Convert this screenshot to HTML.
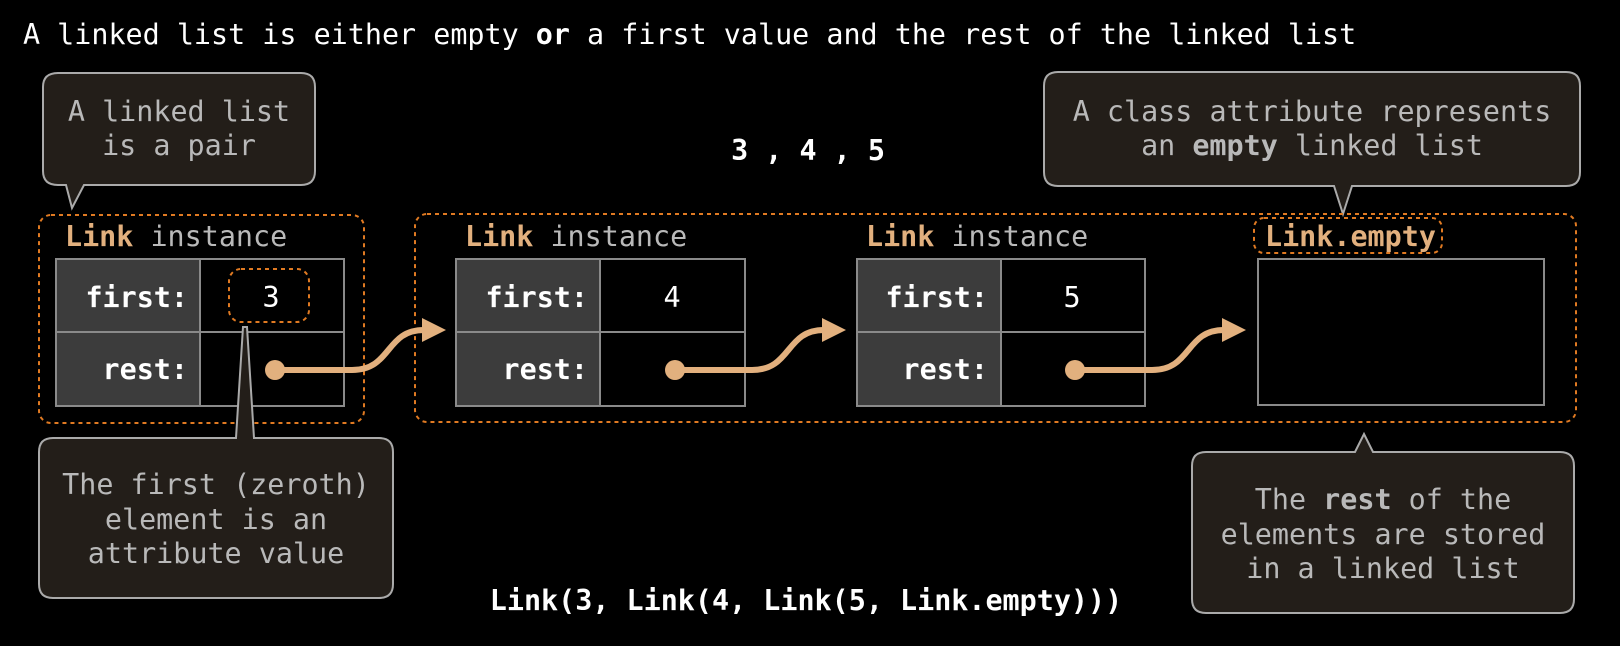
<!DOCTYPE html>
<html><head><meta charset="utf-8"><style>
html,body{margin:0;padding:0;background:#000;width:1620px;height:646px;overflow:hidden}
svg{display:block}
text{font-family:"DejaVu Sans Mono","Liberation Mono",monospace;font-size:28.4px}
.w{fill:#fff}.g{fill:#b9b9b9}.o{fill:#e2b07e;font-weight:bold}.b{font-weight:bold}
</style></head><body>
<svg width="1620" height="646" viewBox="0 0 1620 646" xmlns="http://www.w3.org/2000/svg">
<text x="23" y="44" class="w">A linked list is either empty <tspan class="b">or</tspan> a first value and the rest of the linked list</text>

<!-- bubble top-left -->
<path d="M58 73 H301 Q315 73 315 87 V171 Q315 185 301 185 H84 L72 208 L66 185 H58 Q43 185 43 171 V87 Q43 73 58 73 Z" fill="#231e19" stroke="#aaa" stroke-width="2"/>
<text x="179" y="121" class="g" text-anchor="middle">A linked list</text>
<text x="179" y="155" class="g" text-anchor="middle">is a pair</text>

<text x="808" y="160" class="w b" text-anchor="middle">3 , 4 , 5</text>

<!-- bubble top-right -->
<path d="M1058 72 H1566 Q1580 72 1580 86 V172 Q1580 186 1566 186 H1352 L1343 214 L1334 186 H1058 Q1044 186 1044 172 V86 Q1044 72 1058 72 Z" fill="#231e19" stroke="#aaa" stroke-width="2"/>
<text x="1312" y="121" class="g" text-anchor="middle">A class attribute represents</text>
<text x="1312" y="155" class="g" text-anchor="middle">an <tspan class="b">empty</tspan> linked list</text>

<!-- dashed boxes -->
<rect x="39" y="215" width="325" height="208" rx="12" fill="none" stroke="#e07a22" stroke-width="2" stroke-dasharray="4 4"/>
<rect x="415" y="214" width="1161" height="208" rx="12" fill="none" stroke="#e07a22" stroke-width="2" stroke-dasharray="4 4"/>

<text x="65" y="246" class="o">Link<tspan class="g" style="font-weight:normal"> instance</tspan></text>
<text x="465" y="246" class="o">Link<tspan class="g" style="font-weight:normal"> instance</tspan></text>
<text x="866" y="246" class="o">Link<tspan class="g" style="font-weight:normal"> instance</tspan></text>
<rect x="1254" y="218" width="188" height="35" rx="10" fill="none" stroke="#e07a22" stroke-width="2" stroke-dasharray="4 4"/>
<text x="1265" y="246" class="o">Link.empty</text>

<!-- tables -->
<g stroke="#8a8a8a" stroke-width="2">
<rect x="56" y="259" width="144" height="147" fill="#3c3c3c"/>
<rect x="200" y="259" width="144" height="147" fill="#000"/>
<line x1="56" y1="332" x2="344" y2="332"/>
<rect x="456" y="259" width="144" height="147" fill="#3c3c3c"/>
<rect x="600" y="259" width="145" height="147" fill="#000"/>
<line x1="456" y1="332" x2="745" y2="332"/>
<rect x="857" y="259" width="144" height="147" fill="#3c3c3c"/>
<rect x="1001" y="259" width="144" height="147" fill="#000"/>
<line x1="857" y1="332" x2="1145" y2="332"/>
<rect x="1258" y="259" width="286" height="146" fill="#000"/>
</g>
<g class="w b">
<text x="188" y="307" text-anchor="end" class="w b">first:</text>
<text x="188" y="379" text-anchor="end" class="w b">rest:</text>
<text x="588" y="307" text-anchor="end" class="w b">first:</text>
<text x="588" y="379" text-anchor="end" class="w b">rest:</text>
<text x="988" y="307" text-anchor="end" class="w b">first:</text>
<text x="988" y="379" text-anchor="end" class="w b">rest:</text>
</g>
<rect x="229" y="269" width="80" height="53" rx="12" fill="none" stroke="#e07a22" stroke-width="2" stroke-dasharray="4 4"/>
<text x="271" y="307" class="w" text-anchor="middle">3</text>
<text x="672" y="307" class="w" text-anchor="middle">4</text>
<text x="1072" y="307" class="w" text-anchor="middle">5</text>

<!-- arrows -->
<g fill="#e2b07e" stroke="none">
<circle cx="275" cy="370" r="10"/><circle cx="675" cy="370" r="10"/><circle cx="1075" cy="370" r="10"/>
<polygon points="422,318 446,330 422,342"/><polygon points="822,318 846,330 822,342"/><polygon points="1222,318 1246,330 1222,342"/>
</g>
<g fill="none" stroke="#e2b07e" stroke-width="6">
<path d="M275 370 H352 C392 370 385 330 424 330"/>
<path d="M675 370 H752 C792 370 785 330 824 330"/>
<path d="M1075 370 H1152 C1192 370 1185 330 1224 330"/>
</g>

<!-- bubble bottom-left -->
<path d="M53 438 H236 L243 327 L247 327 L254 438 H379 Q393 438 393 452 V584 Q393 598 379 598 H53 Q39 598 39 584 V452 Q39 438 53 438 Z" fill="#231e19" stroke="#aaa" stroke-width="2"/>
<text x="216" y="494" class="g" text-anchor="middle">The first (zeroth)</text>
<text x="216" y="529" class="g" text-anchor="middle">element is an</text>
<text x="216" y="563" class="g" text-anchor="middle">attribute value</text>

<!-- bubble bottom-right -->
<path d="M1206 452 H1355 L1364 434 L1373 452 H1560 Q1574 452 1574 466 V599 Q1574 613 1560 613 H1206 Q1192 613 1192 599 V466 Q1192 452 1206 452 Z" fill="#231e19" stroke="#aaa" stroke-width="2"/>
<text x="1383" y="509" class="g" text-anchor="middle">The <tspan class="b">rest</tspan> of the</text>
<text x="1383" y="544" class="g" text-anchor="middle">elements are stored</text>
<text x="1383" y="578" class="g" text-anchor="middle">in a linked list</text>

<text x="806" y="610" class="w b" text-anchor="middle">Link(3, Link(4, Link(5, Link.empty)))</text>
</svg>
</body></html>
